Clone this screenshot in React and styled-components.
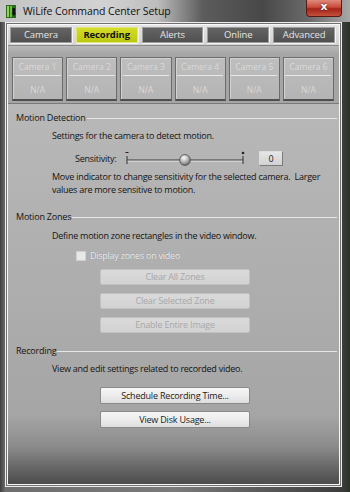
import React from "react"
import styled, { createGlobalStyle } from "styled-components"

const GlobalStyle = createGlobalStyle`
  html, body {
    margin: 0;
    padding: 0;
    background: #2e2e2e;
  }
  body {
    font-family: "Open Sans", "Noto Sans", "Liberation Sans", sans-serif;
  }
`

const tabs = ["Camera", "Recording", "Alerts", "Online", "Advanced"]
const cameras = [1, 2, 3, 4, 5, 6]

const Slider = () => (
  <svg width="122" height="16" viewBox="0 0 122 16">
    <defs>
      <radialGradient id="knob" cx="40%" cy="30%" r="70%">
        <stop offset="0%" stopColor="#ffffff" />
        <stop offset="55%" stopColor="#b4b4b4" />
        <stop offset="100%" stopColor="#6a6a6a" />
      </radialGradient>
    </defs>
    <line x1="3" y1="10" x2="119" y2="10" stroke="#3a3a3a" strokeWidth="1.2" />
    <line x1="3" y1="11.2" x2="119" y2="11.2" stroke="#e8e8e8" strokeWidth="0.8" />
    <line x1="3" y1="6" x2="3" y2="14" stroke="#333" strokeWidth="1" />
    <line x1="119" y1="6" x2="119" y2="14" stroke="#333" strokeWidth="1" />
    <line x1="1.5" y1="2.5" x2="4.5" y2="2.5" stroke="#222" strokeWidth="1" />
    <circle cx="119" cy="3" r="1.3" fill="#222" />
    <circle cx="61" cy="10" r="5.4" fill="url(#knob)" stroke="#4a4a4a" strokeWidth="0.8" />
  </svg>
)

const AppIcon = () => (
  <svg width="10" height="13" viewBox="0 0 10 13">
    <rect x="0" y="0" width="10" height="13" fill="#2c6a1e" />
    <rect x="1" y="1" width="2" height="11" fill="#8fd35a" />
    <rect x="4" y="1" width="2" height="11" fill="#6cbf3a" />
    <path d="M6.5 3 L9 3 L9 8 L10 8 L7.75 11 L5.5 8 L6.5 8 Z" fill="#111" />
  </svg>
)

const App = () => (
  <>
    <GlobalStyle />
    <Window>
      <TitleBar>
        <AppIcon />
        <Title>WiLife Command Center Setup</Title>
        <CloseButton>x</CloseButton>
      </TitleBar>
      <Client>
        <Inner>
          <TabStrip>
            {tabs.map((t) => (
              <Tab key={t} $active={t === "Recording"}>
                {t}
              </Tab>
            ))}
          </TabStrip>
          <TabShelf />
          <CameraRow>
            {cameras.map((n) => (
              <CameraTile key={n}>
                <CameraName>Camera {n}</CameraName>
                <CameraState>N/A</CameraState>
              </CameraTile>
            ))}
          </CameraRow>
          <Panel>
            <Section>
              <SectionHeader>Motion Detection</SectionHeader>
              <Text $mt="5px">Settings for the camera to detect motion.</Text>
              <SensitivityRow>
                <Label>Sensitivity:</Label>
                <Slider />
                <ValueBox>0</ValueBox>
              </SensitivityRow>
              <Text $mt="4px">
                Move indicator to change sensitivity for the selected camera.&nbsp; Larger
                <br />
                values are more sensitive to motion.
              </Text>
            </Section>

            <Section $mt="14px">
              <SectionHeader>Motion Zones</SectionHeader>
              <Text $mt="6px">Define motion zone rectangles in the video window.</Text>
              <CheckRow>
                <CheckBox />
                <span>Display zones on video</span>
              </CheckRow>
              <ButtonStack $mt="7px" $gap="8px">
                <Button disabled>Clear All Zones</Button>
                <Button disabled>Clear Selected Zone</Button>
                <Button disabled>Enable Entire Image</Button>
              </ButtonStack>
            </Section>

            <Section $mt="11px">
              <SectionHeader>Recording</SectionHeader>
              <Text $mt="5px">View and edit settings related to recorded video.</Text>
              <ButtonStack $mt="12px" $gap="7px">
                <Button $tall>Schedule Recording Time...</Button>
                <Button $tall>View Disk Usage...</Button>
              </ButtonStack>
            </Section>
          </Panel>
        </Inner>
      </Client>
    </Window>
  </>
)

export default App

const Window = styled.div`
  width: 350px;
  height: 492px;
  box-sizing: border-box;
  display: flex;
  flex-direction: column;
  padding: 0 8px 5px 5px;
  background: linear-gradient(
    90deg,
    #3e3e3e 0%,
    #6e6e6e 1.5%,
    #7a7a7a 50%,
    #3c3c3c 98%,
    #2a3324 100%
  );
  overflow: hidden;
`

const TitleBar = styled.div`
  height: 22px;
  flex: none;
  display: flex;
  align-items: center;
  gap: 7px;
  margin: 0 -8px 0 -5px;
  padding: 0 0 0 6px;
  background: linear-gradient(
    90deg,
    #c4c4c4 0%,
    #d2d2d2 30%,
    #bdbdbd 45%,
    #5c5c5c 58%,
    #484848 75%,
    #6a6a6a 88%,
    #a8a8a8 100%
  );
`

const Title = styled.span`
  font-size: 10.5px;
  color: #111;
  letter-spacing: -0.1px;
  flex: 1;
`

const CloseButton = styled.div`
  align-self: flex-start;
  width: 36px;
  height: 17px;
  margin-right: 8px;
  box-sizing: border-box;
  border: 1px solid #5a1a14;
  border-top: none;
  border-radius: 0 0 4px 4px;
  background: linear-gradient(180deg, #e08a7c 0%, #c84b3a 45%, #a3241a 55%, #c4503a 100%);
  color: #fff;
  font-family: "DejaVu Sans", sans-serif;
  font-weight: bold;
  font-size: 11px;
  line-height: 14px;
  text-align: center;
  text-shadow: 0 0 2px #400;
`

const Client = styled.div`
  flex: 1;
  display: flex;
  border: 1px solid #ededed;
  padding: 1px;
  background: #707070;
`

const Inner = styled.div`
  flex: 1;
  display: flex;
  flex-direction: column;
  border: 1px solid #f8f8f8;
  background: #a9a9a9;
`

const TabStrip = styled.div`
  display: flex;
  gap: 4px;
  padding: 2px 4px 2px 2px;
  background: linear-gradient(180deg, #e4e4e4 0%, #d2d2d2 100%);
`

const Tab = styled.div`
  flex: 1;
  height: 16px;
  box-sizing: border-box;
  border: 1px solid ${(p) => (p.$active ? "#dfe67a" : "#9c9c9c")};
  box-shadow: 0 1px 0 #f4f4f4, 1px 0 0 #f4f4f4;
  background: ${(p) =>
    p.$active
      ? "linear-gradient(180deg, #d4dd2a 0%, #bcc80e 100%)"
      : "linear-gradient(180deg, #646464 0%, #505050 100%)"};
  color: ${(p) => (p.$active ? "#111" : "#e4e4e4")};
  font-size: 9.5px;
  font-weight: ${(p) => (p.$active ? 700 : 400)};
  letter-spacing: -0.1px;
  line-height: 14px;
  text-align: center;
`

const TabShelf = styled.div`
  height: 8px;
  border-top: 1px solid #8c8c8c;
  background: linear-gradient(180deg, #b8b8b8 0%, #a6a6a6 100%);
`

const CameraRow = styled.div`
  display: flex;
  gap: 3px;
  padding: 3px 5px 2px 4px;
  background: #a5a5a5;
  border-bottom: 1px solid #7a7a7a;
`

const CameraTile = styled.div`
  flex: 1;
  height: 44px;
  box-sizing: border-box;
  display: flex;
  flex-direction: column;
  align-items: center;
  border: 1px solid #6c6c6c;
  border-bottom: 2px solid #4e4e4e;
  box-shadow: inset 1px 1px 0 #d2d2d2;
  background: linear-gradient(180deg, #bebebe 0%, #b4b4b4 100%);
  color: #dadada;
  font-size: 8.5px;
`

const CameraName = styled.div`
  margin-top: 3px;
  padding: 0 4px 2px;
  line-height: 12px;
  border-bottom: 1px solid #e8e8e8;
`

const CameraState = styled.div`
  margin-top: 8px;
  line-height: 12px;
`

const Panel = styled.div`
  flex: 1;
  display: flex;
  flex-direction: column;
  padding: 7px 2px 0 8px;
  background: linear-gradient(
    180deg,
    #b8b8b8 0%,
    #acacac 55%,
    #a5a5a5 82%,
    #8c8c8c 90%,
    #5e5e5e 97%,
    #4c4c4c 100%
  );
`

const Section = styled.div`
  display: flex;
  flex-direction: column;
  margin-top: ${(p) => p.$mt || "0"};
`

const SectionHeader = styled.div`
  display: flex;
  align-items: center;
  gap: 1px;
  font-size: 9px;
  letter-spacing: -0.2px;
  color: #141414;
  line-height: 13px;

  &::after {
    content: "";
    flex: 1;
    height: 1px;
    margin-top: 2px;
    background: #e6e6e6;
  }
`

const Text = styled.div`
  margin-top: ${(p) => p.$mt || "0"};
  padding-left: 36px;
  font-size: 9px;
  letter-spacing: -0.25px;
  line-height: 13px;
  color: #141414;
  white-space: nowrap;
`

const SensitivityRow = styled.div`
  display: flex;
  align-items: center;
  padding-left: 59px;
  height: 16px;
  margin-top: 8px;
`

const Label = styled.span`
  font-size: 9px;
  letter-spacing: -0.25px;
  color: #141414;
  width: 49px;
`

const ValueBox = styled.div`
  margin-left: 13px;
  width: 24px;
  height: 15px;
  box-sizing: border-box;
  border: 1px solid #dcdcdc;
  border-right-color: #7a7a7a;
  border-bottom-color: #7a7a7a;
  background: linear-gradient(180deg, #e6e6e6 0%, #d2d2d2 100%);
  font-size: 9px;
  line-height: 13px;
  text-align: center;
  color: #222;
`

const CheckRow = styled.div`
  display: flex;
  align-items: center;
  gap: 4px;
  margin-top: 7px;
  height: 13px;
  padding-left: 60px;
  font-size: 9px;
  letter-spacing: -0.25px;
  color: #ececec;
  text-shadow: 0 0 1px #8a8a8a;
`

const CheckBox = styled.span`
  width: 8px;
  height: 8px;
  border: 1px solid #cfcfcf;
  background: #e8e8e8;
`

const ButtonStack = styled.div`
  display: flex;
  flex-direction: column;
  gap: ${(p) => p.$gap || "8px"};
  margin-top: ${(p) => p.$mt || "0"};
  padding-left: 84px;
`

const Button = styled.button`
  width: 150px;
  height: ${(p) => (p.$tall ? "17px" : "16px")};
  padding: 0;
  box-sizing: border-box;
  border: 1px solid ${(p) => (p.disabled ? "#c2c2c2" : "#8a8a8a")};
  border-radius: 2px;
  background: ${(p) =>
    p.disabled
      ? "linear-gradient(180deg, #dadada 0%, #d2d2d2 100%)"
      : "linear-gradient(180deg, #f6f6f6 0%, #ececec 50%, #dedede 100%)"};
  color: ${(p) => (p.disabled ? "#a8a8a8" : "#1a1a1a")};
  font-family: "Open Sans", "Noto Sans", sans-serif;
  font-size: 9px;
  letter-spacing: -0.2px;
  line-height: 14px;
  text-align: center;
`
